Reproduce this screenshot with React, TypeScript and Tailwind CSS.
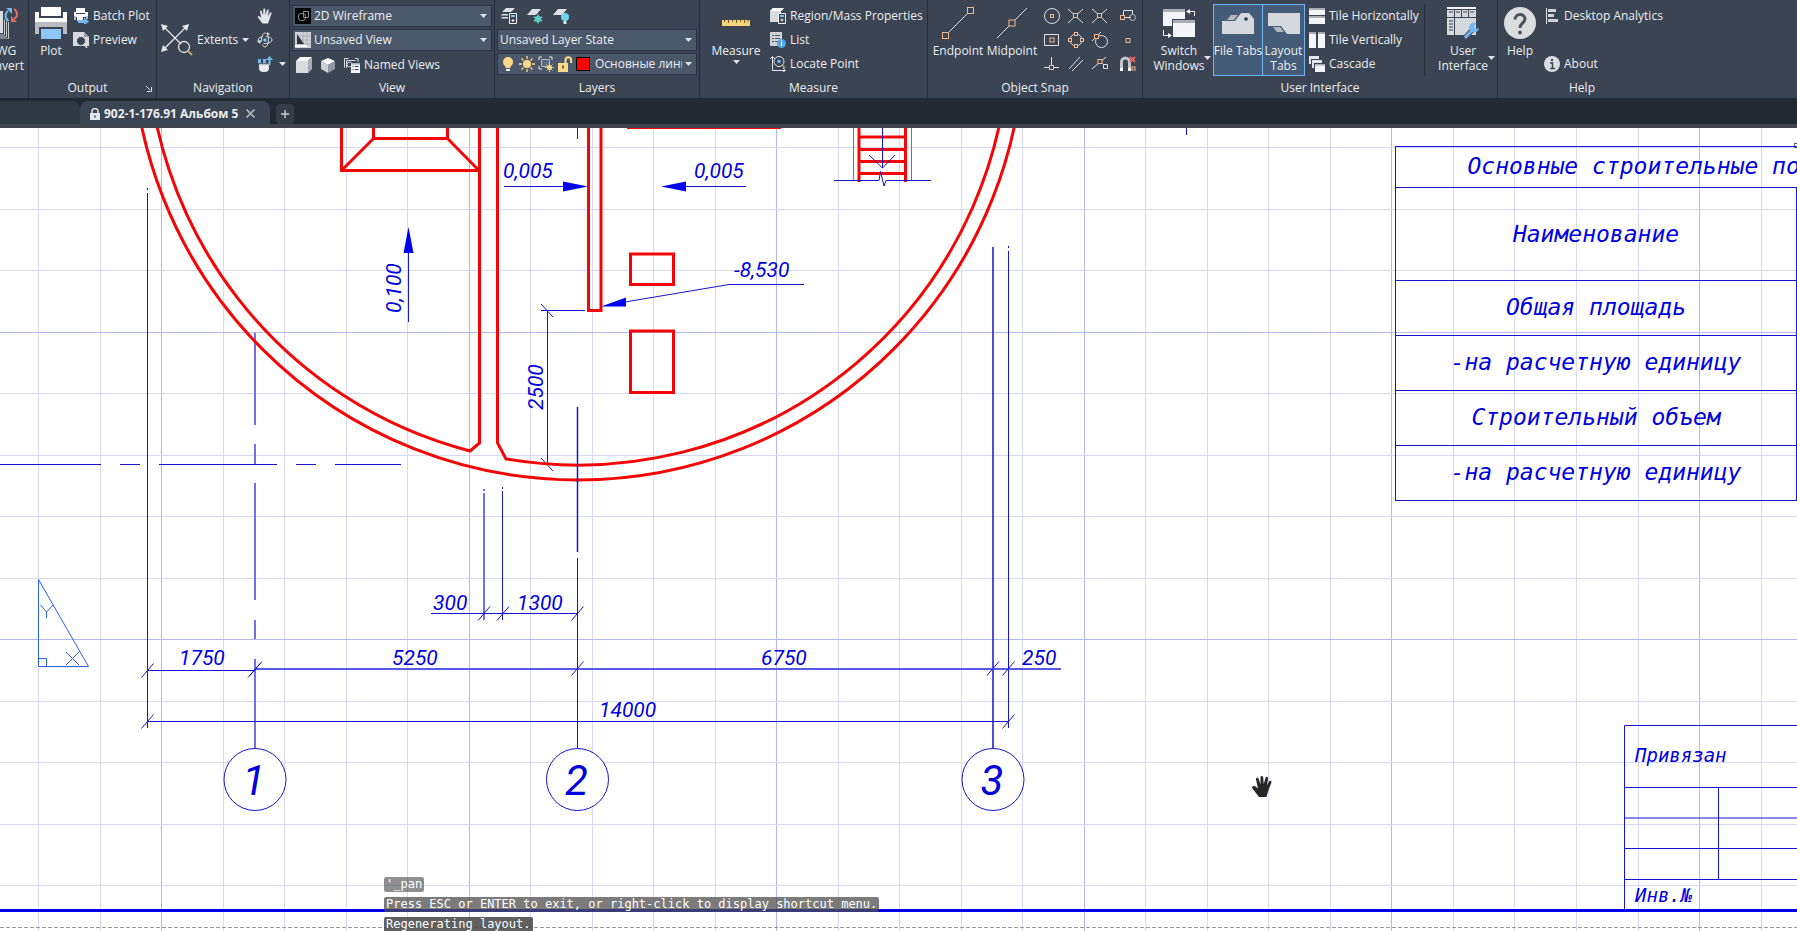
import type { ReactNode } from 'react';
import clsx from 'clsx';

const INK = '#1414d2';
const PEN = '#0000e0';
const WALL = '#f40606';

/* ---------- small icons ---------- */

function Svg({ size = 16, children, className }: { size?: number; children: ReactNode; className?: string }) {
  return (
    <svg width={size} height={size} viewBox={`0 0 ${size} ${size}`} fill="none" className={clsx('shrink-0', className)} aria-hidden="true">
      {children}
    </svg>
  );
}

function Caret({ className }: { className?: string }) {
  return (
    <svg width="7" height="4" viewBox="0 0 7 4" className={clsx('shrink-0', className)} aria-hidden="true">
      <path d="M0 0h7L3.500 4z" fill="#dde1e7" />
    </svg>
  );
}

const ConvertIcon = () => (
  <Svg size={32}>
    <path d="M0 4h17v22H0z" fill="#d9dbde" />
    <path d="M18.500 8v20H2M20.500 11v19H2M22.500 14v18H2" stroke="#c3c6cb" />
    <path d="M17 0h15v15H21l-4-4z" fill="#3b4453" />
    <path d="M22.500 14a6 6 0 0 1-.5-10" stroke="#6fb9f0" strokeWidth="2" />
    <path d="M20 1h6v6z" fill="#6fb9f0" />
    <path d="M28 2a6 6 0 0 1 .5 10" stroke="#ee6a64" strokeWidth="2" />
    <path d="M31 15h-6V9z" fill="#ee6a64" />
  </Svg>
);

const PlotIcon = () => (
  <Svg size={32}>
    <path d="M6 0h20v9H6z" fill="#fff" />
    <path d="M0 5h4v6h24V5h4v15H0z" fill="#fff" />
    <path d="M0 15h32v12h-4v-7H4v7H0z" fill="#b9bbbe" />
    <path d="M6 22h20v10H6z" fill="#8cc8f8" />
    <path d="M6 20h20v2H6z" fill="#3b4453" />
  </Svg>
);

const BatchPlotIcon = () => (
  <Svg>
    <path d="M3 0h9v4H3zM1 4h14v5H1z" fill="#fff" />
    <path d="M1 8h2v4H1zM13 8h2v3h-2z" fill="#b9bbbe" />
    <path d="M3 5h9v1H3z" fill="#3b4453" />
    <path d="M4 9h6v4H4z" fill="#fff" />
    <path d="M5 12h6V9.500l5 4-5 4V15H5z" fill="#6fb9f0" />
  </Svg>
);

const PreviewIcon = () => (
  <Svg>
    <path d="M0 0h11l5 5v9H0z" fill="#d9dbde" />
    <path d="M11 0l5 5h-5z" fill="#9aa0aa" />
    <circle cx="8" cy="9" r="4.500" fill="#3b4453" stroke="#d9dbde" />
    <path d="M11 12l3 4" stroke="#d9dbde" strokeWidth="1.500" />
  </Svg>
);

const ExtentsIcon = () => (
  <Svg size={32}>
    <path d="M3 3l17 17M2 26L26 2" stroke="#e3e5e9" strokeWidth="1.300" />
    <path d="M0 0l7 2-5 5zM28 0l-2 7-5-5zM0 28l2-7 5 5z" fill="#e3e5e9" />
    <circle cx="23" cy="23" r="5.500" stroke="#e3e5e9" strokeWidth="1.300" />
    <path d="M27 27l4 4" stroke="#c9a76a" strokeWidth="2" />
  </Svg>
);

const PanIcon = () => (
  <Svg>
    <path
      d="M5.500 15.500L1 9.500c-.8-1 .6-2 1.500-1.200L4.300 10 3 3.500c-.2-1.300 1.500-1.500 1.800-.3L6.200 7.500 6.300 1.500c0-1.400 1.900-1.400 2 0l.3 5.800 1.300-5c.3-1.200 2-.8 1.800.4l-.7 5.600 1.900-3.600c.6-1 2-.4 1.600.8L12.300 12l-1.300 3.500z"
      fill="#e3e5e9"
    />
  </Svg>
);

const OrbitIcon = () => (
  <Svg>
    <ellipse cx="8" cy="8" rx="7" ry="3.500" stroke="#d9dbde" strokeDasharray="10 3" />
    <ellipse cx="8" cy="8" rx="3.500" ry="7" stroke="#d9dbde" strokeDasharray="12 3" />
    <circle cx="8" cy="8" r="1.800" fill="#7ec3f5" />
    <path d="M10 0l3 2-3 2zM0 9l3 3 1-4z" fill="#d9dbde" />
  </Svg>
);

const WheelIcon = () => (
  <Svg>
    <path d="M2 8h10v4a4 4 0 0 1-4 4H6a4 4 0 0 1-4-4z" fill="#e9eaec" />
    <path d="M1 3h3v4H1zM6 3h3v4H6z" fill="#6fb9f0" />
    <path d="M2 8h10" stroke="#8b919b" />
    <path d="M11.500 9V4H9l3.500-4L16 4h-2.500v5z" fill="#6fb9f0" />
  </Svg>
);

const WireframeIcon = () => (
  <Svg>
    <path d="M0 0h16v16H0z" fill="#050505" />
    <circle cx="7" cy="9" r="3.800" stroke="#8d8d8d" />
    <path d="M8.500 3.500h5v6h-5z" stroke="#8d8d8d" />
  </Svg>
);

const UnsavedViewIcon = () => (
  <Svg>
    <path d="M0 0h16v16H0z" fill="#cfd1d4" />
    <path d="M8 0v14M12 0v14M2 4h14M2 8h14M2 12h14" stroke="#aeb2b8" />
    <path d="M2 2v10h7z" fill="#2b3340" />
    <path d="M0 14h12" stroke="#fff" strokeWidth="2" />
  </Svg>
);

const TopCubeIcon = () => (
  <Svg>
    <path d="M0 4h12v12H0z" fill="#d9dbde" />
    <path d="M0 4l4-4h12l-4 4z" fill="#fff" />
    <path d="M12 4l4-4v12l-4 4z" fill="#a9adb4" />
  </Svg>
);

const IsoCubeIcon = () => (
  <Svg>
    <path d="M8 1l7 3-7 4-7-4z" fill="#fff" />
    <path d="M1 4l7 4v8l-7-4z" fill="#cfd1d4" />
    <path d="M15 4L8 8v8l7-4z" fill="#9298a2" />
  </Svg>
);

const NamedViewsIcon = () => (
  <Svg>
    <path d="M.5 10.500V1.500h4M11 1.500h3V5M2.500 11V3.500h9" stroke="#d9dbde" />
    <circle cx="5.500" cy="7.500" r="2.500" stroke="#d9dbde" />
    <path d="M7 6h9v10H7z" fill="#f2f3f4" />
    <path d="M8.500 9.500h1M11 9.500h3.500M8.500 12.500h1M11 12.500h3.500" stroke="#3b4453" />
    <path d="M7 6h9v1.500H7z" fill="#a9adb4" />
  </Svg>
);

const LayerStateIcon = () => (
  <Svg>
    <path d="M5 0h9l-4 4H1zM1 6h6v1.500H0zM1 9h6v1.500H0z" fill="#dfe1e4" />
    <path d="M8.500 5.500h7v10h-7z" fill="#3b4453" stroke="#f2f3f4" />
    <path d="M10 7h4v2h-4z" fill="#7ec3f5" />
    <path d="M12 11v3M10.500 12.500h3" stroke="#f2f3f4" />
  </Svg>
);

const LayerFreezeIcon = () => (
  <Svg>
    <path d="M5 1h9L9 7H0z" fill="#dfe1e4" />
    <circle cx="11" cy="11" r="5" fill="#3b4453" />
    <path d="M11 6.500v9M7 9l8 4M15 9l-8 4" stroke="#62d6cf" strokeWidth="1.500" />
    <circle cx="11" cy="11" r="2.800" stroke="#62d6cf" />
  </Svg>
);

const LayerOffIcon = () => (
  <Svg>
    <path d="M5 1h9L9 7H0z" fill="#dfe1e4" />
    <circle cx="12" cy="9" r="4" fill="#6fd3f0" />
    <path d="M10.500 13h3v3h-3z" fill="#dfe1e4" />
  </Svg>
);

const BulbIcon = () => (
  <Svg>
    <circle cx="8" cy="6" r="5" fill="#ffd98a" />
    <path d="M5.500 9h5v3h-5z" fill="#ffd98a" />
    <path d="M6 13h4v2H6z" fill="#f2f3f4" />
  </Svg>
);

const SunIcon = () => (
  <Svg>
    <circle cx="8" cy="8" r="4" fill="#ffd98a" />
    <path d="M8 0v3M8 13v3M0 8h3M13 8h3M2.500 2.500l2 2M11.500 11.500l2 2M2.500 13.500l2-2M11.500 4.500l2-2" stroke="#ffd98a" strokeWidth="1.300" />
  </Svg>
);

const ViewportSunIcon = () => (
  <Svg>
    <path d="M1 4V1h3M11 1h3v3M1 10v3h3" stroke="#e3e5e9" />
    <path d="M3.500 3.500h8v7h-8z" stroke="#aeb6c2" fill="#5d6b7d" />
    <circle cx="11.500" cy="11.500" r="2.500" fill="#ffd98a" />
    <path d="M11.500 7v1.500M11.500 14.500V16M7 11.500h1.500M14.500 11.500H16M8.500 8.500l1 1M14.500 14.500l-1-1M8.500 14.500l1-1M14.500 8.500l-1 1" stroke="#ffd98a" />
  </Svg>
);

const UnlockIcon = () => (
  <Svg>
    <path d="M1 7h10v9H1z" fill="#ffd98a" />
    <path d="M8.500 7V4a2.800 2.800 0 0 1 5.600 0v3" stroke="#ffd98a" strokeWidth="2" />
    <path d="M6 9.500v3" stroke="#3b4453" strokeWidth="1.500" />
  </Svg>
);

const RulerIcon = () => (
  <Svg size={32}>
    <path d="M2 13h28v6H2z" fill="#fbd27c" />
    <path d="M4.500 13v2M8.500 13v3M12.500 13v2M16.500 13v3M20.500 13v2M24.500 13v3M28 13v2" stroke="#7a5a20" />
  </Svg>
);

const RegionIcon = () => (
  <Svg>
    <path d="M0 3l3-3h11l-3 3v11H0z" fill="#d9dbde" />
    <path d="M0 3l3-3h11l-3 3z" fill="#fff" />
    <path d="M8.500 5.500h7v10h-7z" fill="#3b4453" stroke="#f2f3f4" />
    <path d="M10 7h4v2h-4z" fill="#7ec3f5" />
    <path d="M12 10.500v3M10.500 12h3" stroke="#f2f3f4" />
  </Svg>
);

const ListIcon = () => (
  <Svg>
    <path d="M0 0h12v14H0z" fill="#cfd1d4" />
    <path d="M2 3.500h2M5 3.500h5M2 6.500h2M5 6.500h5M2 9.500h2M5 9.500h3" stroke="#4d5766" />
    <circle cx="11.500" cy="11.500" r="4.500" fill="#4ea3e6" />
    <path d="M11.500 10.500v3.500M11.500 8.500v1" stroke="#fff" strokeWidth="1.300" />
  </Svg>
);

const LocateIcon = () => (
  <Svg>
    <path d="M2.500 1v13.500H15M0 3l2.500-2.500L5 3M13 12l2.500 2.500L13 16" stroke="#e3e5e9" />
    <circle cx="9" cy="5.500" r="5" stroke="#e3e5e9" />
    <circle cx="9" cy="5.500" r="1.800" fill="#6fb9f0" />
    <path d="M12 9l3 3" stroke="#c9a76a" strokeWidth="1.500" />
  </Svg>
);

const Node = ({ x, y, s = 4 }: { x: number; y: number; s?: number }) => (
  <rect x={x - s / 2} y={y - s / 2} width={s} height={s} fill="#3b4453" stroke="#f3b98c" />
);

const EndpointIcon = () => (
  <Svg size={32}>
    <path d="M4 28L28 4" stroke="#dfe1e4" />
    <Node x={3.5} y={28.5} s={6} />
    <Node x={28.5} y={3.5} s={6} />
  </Svg>
);

const MidpointIcon = () => (
  <Svg size={32}>
    <path d="M1 31L31 1" stroke="#dfe1e4" />
    <Node x={16} y={16} s={6} />
  </Svg>
);

const SNAPS: { name: string; art: ReactNode }[] = [
  { name: 'Center', art: <><circle cx="8" cy="8" r="7.500" stroke="#dfe1e4" /><Node x={8} y={8} s={3} /></> },
  { name: 'Intersection', art: <><path d="M0 1l15 14M15 1L0 15" stroke="#dfe1e4" /><Node x={7.5} y={7.5} /></> },
  { name: 'Apparent Intersection', art: <><path d="M0 1l6 5M9 9l6 6M15 1L0 15" stroke="#dfe1e4" /><Node x={7.5} y={7.5} /></> },
  { name: 'Insertion', art: <><path d="M3.500 9V2.500h9V6M5 9.500h6" stroke="#dfe1e4" /><circle cx="12.500" cy="9.500" r="3" stroke="#b9bdc4" /><Node x={2.5} y={9.5} /></> },
  { name: 'Geometric Center', art: <><path d="M.5 2.500h14v11H.5z" stroke="#dfe1e4" /><Node x={8} y={8} /></> },
  { name: 'Quadrant', art: <><circle cx="8" cy="8" r="6" stroke="#dfe1e4" /><Node x={8} y={2} s={3} /><Node x={8} y={14} s={3} /><Node x={2} y={8} s={3} /><Node x={14} y={8} s={3} /></> },
  { name: 'Tangent', art: <><circle cx="9.500" cy="9.500" r="6" stroke="#dfe1e4" /><path d="M0 9L9 0" stroke="#dfe1e4" /><Node x={4.5} y={4.5} /></> },
  { name: 'Node', art: <Node x={8} y={8.5} /> },
  { name: 'Perpendicular', art: <><path d="M0 11.500h15M7.500 1v10" stroke="#dfe1e4" /><Node x={7.5} y={11.5} /></> },
  { name: 'Parallel', art: <path d="M1 13L12 1M4 15L15 4" stroke="#dfe1e4" /> },
  { name: 'Nearest', art: <><path d="M0 13L14 1M8 5l6 6" stroke="#dfe1e4" /><Node x={8} y={5.5} /><path d="M11.500 8.500h4v4h-4z" fill="#3b4453" stroke="#dfe1e4" /></> },
  { name: 'None', art: <><path d="M1.500 12V6a4 4 0 0 1 8 0v6" stroke="#c3c6cb" strokeWidth="3" /><path d="M0 12h3v3H0zM8 12h3v3H8z" fill="#fff" /><path d="M10 1l5 5M15 1l-5 5" stroke="#f0605a" strokeWidth="2" /><Node x={13.5} y={12.5} s={3} /></> },
];

const SwitchWindowsIcon = () => (
  <Svg size={32}>
    <path d="M0 2h22v17H0z" fill="#f4f5f6" />
    <path d="M0 2h22v3H0z" fill="#a9adb4" />
    <path d="M9 12h23v19H9z" fill="#3b4453" />
    <path d="M10 13h22v17H10z" fill="#f4f5f6" />
    <path d="M10 13h22v3H10z" fill="#a9adb4" />
    <path d="M31.500 9V4.500H25M.5 23v5.500H6" stroke="#f4f5f6" />
    <path d="M23 4.500L27 2v5zM9 28.500L5 26v5z" fill="#f4f5f6" />
  </Svg>
);

const FileTabsIcon = () => (
  <Svg size={32}>
    <path d="M0 14h13l6-8h8l5 6v15H0z" fill="#d5d8dc" />
    <path d="M5 13l4-5h7l-4 5z" fill="#b4b8be" />
    <circle cx="24" cy="12" r="1.800" fill="#2b3340" />
  </Svg>
);

const LayoutTabsIcon = () => (
  <Svg size={32}>
    <path d="M0 6h32v21H19l-6-8H0z" fill="#d5d8dc" />
    <path d="M5 20h7l4 5H9z" fill="#b4b8be" />
  </Svg>
);

const TileHIcon = () => (
  <Svg>
    <path d="M0 1h16v6H0zM0 9h16v7H0z" fill="#f4f5f6" />
    <path d="M0 0h16v2H0zM0 8h16v2H0z" fill="#a9adb4" />
  </Svg>
);

const TileVIcon = () => (
  <Svg>
    <path d="M0 0h7v16H0zM9 0h7v16H9z" fill="#f4f5f6" />
    <path d="M0 0h7v2H0zM9 0h7v2H9z" fill="#a9adb4" />
  </Svg>
);

const CascadeIcon = () => (
  <Svg>
    <path d="M0 0h10v3H2v5H0z" fill="#e3e5e9" />
    <path d="M3 4h10v3H5v5H3z" fill="#e3e5e9" />
    <path d="M6 8h10v8H6z" fill="#f4f5f6" />
    <path d="M6 8h10v1.500H6z" fill="#a9adb4" />
  </Svg>
);

const UserInterfaceIcon = () => (
  <Svg size={32}>
    <path d="M0 0h29v2H0z" fill="#f2f3f4" />
    <path d="M0 3h29v7H0zM0 11h7v17H0zM8 11h21v17H8z" fill="#d5d8dc" />
    <path d="M2 5h4M9 5h4M16 5h4M23 5h4M7.500 3v7M14.500 3v7M21.500 3v7M2 14h4M2 17h4M2 20h4M2 23h4" stroke="#3b4453" />
    <path d="M18 31l8-9" stroke="#3b4453" strokeWidth="5" />
    <path d="M18 31l8-9" stroke="#6fb9f0" strokeWidth="3" />
    <path d="M29 16a5 5 0 1 0 3 5l-3 1-2-2z" fill="#6fb9f0" />
  </Svg>
);

const HelpIcon = () => (
  <Svg size={32}>
    <circle cx="16" cy="16" r="16" fill="#dcdddf" />
    <path d="M11 12.500c0-6.500 10-6.500 10-.5 0 4-5 4-5 9" stroke="#4d535c" strokeWidth="3" />
    <circle cx="16" cy="25.500" r="2" fill="#4d535c" />
  </Svg>
);

const AnalyticsIcon = () => (
  <Svg>
    <path d="M2.500 0v16" stroke="#dfe1e4" />
    <path d="M4 1h8v3H4zM4 6h6v3H4zM4 11h10v3H4z" fill="#cfd1d4" />
  </Svg>
);

const AboutIcon = () => (
  <Svg>
    <circle cx="8" cy="8" r="8" fill="#dcdddf" />
    <path d="M6 7h2.500v5M6 12.500h5" stroke="#3b4453" strokeWidth="1.500" />
    <circle cx="8" cy="4" r="1.200" fill="#3b4453" />
  </Svg>
);

/* ---------- ribbon building blocks ---------- */

function Panel({ title, className, children, launcher }: { title: string; className: string; children: ReactNode; launcher?: boolean }) {
  return (
    <section aria-label={title || 'Convert'} className={clsx('flex shrink-0 flex-col overflow-hidden border-r border-[#252d39]', className)}>
      <div className="flex h-[76px] pt-1">{children}</div>
      <div className={clsx('relative text-center leading-6', launcher && 'pr-2.5')}>
        {title}
        {launcher && (
          <svg width="6" height="6" viewBox="0 0 6 6" className="absolute right-1 top-2.5" aria-hidden="true">
            <path d="M0 0l4 4M5.500 1v4.500H1" stroke="#dde1e7" fill="none" />
          </svg>
        )}
      </div>
    </section>
  );
}

function BigButton({ icon, lines, caret, active, className }: { icon: ReactNode; lines: string[]; caret?: boolean; active?: boolean; className: string }) {
  return (
    <button
      type="button"
      aria-pressed={active}
      className={clsx('relative flex h-[72px] shrink-0 flex-col items-center', className, active ? 'border border-[#6fb7ee] bg-[#445c78] pt-0.5' : 'pt-[3px]')}
    >
      {icon}
      <span className="mt-1 leading-[15px] whitespace-nowrap">
        {lines.map((line) => (
          <span key={line} className="block">{line}</span>
        ))}
      </span>
      {caret && <Caret className={clsx('absolute', lines.length > 1 ? '-right-1 top-[52px]' : 'top-14')} />}
    </button>
  );
}

function SmallButton({ icon, label }: { icon: ReactNode; label: string }) {
  return (
    <button type="button" className="flex h-6 items-center gap-1 whitespace-nowrap">
      {icon}
      {label}
    </button>
  );
}

function IconButton({ label, children, className }: { label: string; children: ReactNode; className?: string }) {
  return (
    <button type="button" aria-label={label} className={clsx('flex h-6 items-center', className)}>
      {children}
    </button>
  );
}

function Combo({ label, value, icons }: { label: string; value: string; icons?: ReactNode }) {
  return (
    <div className="mb-0.5 flex h-[22px] items-center gap-[3px] border border-[#2a3341] bg-[#4b586a] pr-1 pl-0.5">
      {icons}
      <select aria-label={label} className="h-5 min-w-0 flex-1 appearance-none overflow-hidden bg-transparent outline-none">
        <option>{value}</option>
      </select>
      <Caret className="pointer-events-none" />
    </div>
  );
}

function Ribbon() {
  return (
    <div className="flex h-[98px] shrink-0 overflow-hidden bg-[#3b4453]">
      <Panel title="" className="w-[29px]">
        <BigButton icon={<ConvertIcon />} lines={['DWG', 'Convert']} className="-ml-[22px] w-12" />
      </Panel>

      <Panel title="Output" launcher className="w-32">
        <BigButton icon={<PlotIcon />} lines={['Plot']} className="ml-1 w-9" />
        <div className="ml-1">
          <SmallButton icon={<BatchPlotIcon />} label="Batch Plot" />
          <SmallButton icon={<PreviewIcon />} label="Preview" />
        </div>
      </Panel>

      <Panel title="Navigation" className="w-[133px]">
        <button type="button" className="ml-1 flex h-[72px] items-center gap-1">
          <ExtentsIcon />
          Extents
          <Caret />
        </button>
        <div className="ml-2">
          <IconButton label="Pan"><PanIcon /></IconButton>
          <IconButton label="Orbit"><OrbitIcon /></IconButton>
          <IconButton label="SteeringWheels">
            <WheelIcon />
            <Caret className="ml-1.5" />
          </IconButton>
        </div>
      </Panel>

      <Panel title="View" className="w-[205px]">
        <div className="mt-px w-full px-0.5">
          <Combo label="Visual style" value="2D Wireframe" icons={<WireframeIcon />} />
          <Combo label="View" value="Unsaved View" icons={<UnsavedViewIcon />} />
          <div className="flex gap-2 pl-1">
            <IconButton label="Top"><TopCubeIcon /></IconButton>
            <IconButton label="Isometric"><IsoCubeIcon /></IconButton>
            <SmallButton icon={<NamedViewsIcon />} label="Named Views" />
          </div>
        </div>
      </Panel>

      <Panel title="Layers" className="w-[205px]">
        <div className="w-full px-0.5">
          <div className="mb-px flex gap-2.5 pl-1">
            <IconButton label="Layer properties"><LayerStateIcon /></IconButton>
            <IconButton label="Freeze layer"><LayerFreezeIcon /></IconButton>
            <IconButton label="Layer off"><LayerOffIcon /></IconButton>
          </div>
          <Combo label="Layer state" value="Unsaved Layer State" />
          <Combo
            label="Layer"
            value="Основные линии"
            icons={
              <>
                <BulbIcon />
                <SunIcon />
                <ViewportSunIcon />
                <UnlockIcon />
                <span className="mr-0.5 size-3.5 shrink-0 border border-black bg-[#ff0000]" />
              </>
            }
          />
        </div>
      </Panel>

      <Panel title="Measure" className="w-[228px]">
        <BigButton icon={<RulerIcon />} lines={['Measure']} caret className="ml-2 w-14" />
        <div className="ml-1.5">
          <SmallButton icon={<RegionIcon />} label="Region/Mass Properties" />
          <SmallButton icon={<ListIcon />} label="List" />
          <SmallButton icon={<LocateIcon />} label="Locate Point" />
        </div>
      </Panel>

      <Panel title="Object Snap" className="w-[215px]">
        <BigButton icon={<EndpointIcon />} lines={['Endpoint']} className="ml-1 w-[52px]" />
        <BigButton icon={<MidpointIcon />} lines={['Midpoint']} className="w-14" />
        <div className="ml-1 grid h-[72px] grid-cols-[repeat(4,16px)] gap-x-2">
          {SNAPS.map((snap) => (
            <IconButton key={snap.name} label={snap.name} className="[&:nth-child(4n)]:ml-1">
              <Svg>{snap.art}</Svg>
            </IconButton>
          ))}
        </div>
      </Panel>

      <Panel title="User Interface" className="w-[355px]">
        <BigButton icon={<SwitchWindowsIcon />} lines={['Switch', 'Windows']} caret className="ml-2 w-14" />
        <BigButton icon={<FileTabsIcon />} lines={['File Tabs']} active className="ml-1.5 w-[50px]" />
        <BigButton icon={<LayoutTabsIcon />} lines={['Layout', 'Tabs']} active className="-ml-px w-[43px]" />
        <div className="ml-1">
          <SmallButton icon={<TileHIcon />} label="Tile Horizontally" />
          <SmallButton icon={<TileVIcon />} label="Tile Vertically" />
          <SmallButton icon={<CascadeIcon />} label="Cascade" />
        </div>
        <div className="ml-auto flex border-l border-[#252d39] pr-1.5 pl-2.5">
          <BigButton icon={<UserInterfaceIcon />} lines={['User', 'Interface']} caret className="w-14" />
        </div>
      </Panel>

      <Panel title="Help" className="w-[168px] border-r-0">
        <BigButton icon={<HelpIcon />} lines={['Help']} className="ml-1 w-9" />
        <div className="ml-1.5">
          <SmallButton icon={<AnalyticsIcon />} label="Desktop Analytics" />
          <div className="h-6" />
          <SmallButton icon={<AboutIcon />} label="About" />
        </div>
      </Panel>
    </div>
  );
}

function FileTabBar() {
  return (
    <nav aria-label="Open drawings" className="flex h-[30px] shrink-0 items-end border-b-4 border-[#40454d] bg-[#222933]">
      <div className="h-[23px] w-20 rounded-tr-lg bg-[#303843]" />
      <div className="flex h-[23px] w-[190px] items-center gap-1 rounded-t-lg bg-[#3b4453] pt-0.5 pl-2.5">
        <svg width="10" height="12" viewBox="0 0 10 12" aria-hidden="true">
          <path d="M0 5h10v7H0z" fill="#e3e5e9" />
          <path d="M2 6V3.500a3 3 0 0 1 6 0V6" stroke="#e3e5e9" strokeWidth="1.500" fill="none" />
          <path d="M5 7.500v2" stroke="#3b4453" strokeWidth="1.500" />
        </svg>
        <a href="#drawing" className="font-bold whitespace-nowrap">902-1-176.91 Альбом 5</a>
        <button type="button" aria-label="Close drawing" className="ml-1">
          <svg width="9" height="9" viewBox="0 0 9 9" aria-hidden="true">
            <path d="M.5.500l8 8M8.500.500l-8 8" stroke="#a9adb4" strokeWidth="1.800" />
          </svg>
        </button>
      </div>
      <button type="button" aria-label="New drawing" className="ml-1.5 flex h-5 w-[18px] items-center justify-center rounded bg-[#343c48]">
        <svg width="8" height="8" viewBox="0 0 8 8" aria-hidden="true">
          <path d="M4 0v8M0 4h8" stroke="#c3c6cb" strokeWidth="1.500" />
        </svg>
      </button>
    </nav>
  );
}

/* ---------- drawing sheet ---------- */

const PITCH = 61.52;

function Grid() {
  const cols = Array.from({ length: 60 }, (_, i) => i);
  const rows = Array.from({ length: 30 }, (_, i) => i);
  return (
    <g>
      {cols.map((i) => (
        <rect key={i} x={Math.round(38 + i * PITCH)} y="0" width="1" height="100%" fill={i % 5 === 2 ? '#b3b9ee' : '#d6d8f4'} />
      ))}
      {rows.map((i) => (
        <rect key={i} x="0" y={Math.round(19 + i * PITCH)} width="100%" height="1" fill={i % 5 === 3 ? '#b3b9ee' : '#d6d8f4'} />
      ))}
    </g>
  );
}

// slash marks at the ends of dimension lines
const TICKS: [number, number][] = [
  [484, 613.5], [503, 613.5], [577.5, 613.5],
  [147.5, 670.5], [254, 670.5], [256, 668.5], [577.5, 668.5], [993, 668.5], [1008.5, 668.5],
  [147.5, 721.5], [1008.5, 721.5],
];

const LABELS: { text: string; x: number; y: number; turn?: boolean }[] = [
  { text: '0,005', x: 503, y: 178 },
  { text: '0,005', x: 694, y: 178 },
  { text: '-8,530', x: 734, y: 277 },
  { text: '0,100', x: 401, y: 313, turn: true },
  { text: '2500', x: 543, y: 410, turn: true },
  { text: '300', x: 433, y: 610 },
  { text: '1300', x: 517, y: 610 },
  { text: '1750', x: 179, y: 665 },
  { text: '5250', x: 392, y: 665 },
  { text: '6750', x: 761, y: 665 },
  { text: '250', x: 1022, y: 665 },
  { text: '14000', x: 599, y: 717 },
];

const AXES = [
  { name: '1', x: 255 },
  { name: '2', x: 577.5 },
  { name: '3', x: 993 },
];

function Sheet() {
  return (
    <svg className="absolute inset-0 h-full w-full" role="img" aria-label="Floor plan">
      <Grid />
      {/* the model origin sits above the visible sheet */}
      <g transform="translate(0 -128)" fill="none">
        <g stroke={INK}>
          <path d="M147.500 193V728M147.500 188v2" />
          <path d="M255 333V425M255 444V464M255 483V600M255 620V639M255 659V749" stroke="#7070ec" strokeWidth="2" />
          <path d="M577.500 128V139M577.500 558V749" />
          <path d="M993 247V749" strokeWidth="1.500" />
          <path d="M1008.500 251V728M1008.500 246v2M1186.500 128V135" />
          <path d="M0 464.500H101M120 464.500H140M159 464.500H277M296 464.500H316M335 464.500H401" />
          <path d="M484 493V620M484 489v2" stroke="#7070ec" strokeWidth="2" />
          <path d="M502.500 491V620M502.500 487v2" />
          <path d="M431 613.500H577" />
          <path d="M147 670.500H255M147 721.500H1009" />
          <path d="M255 669H1061" stroke="#5a5ae6" strokeWidth="2" />
          <path d="M547.500 310V465M541 310.500H585" />
          {TICKS.map(([x, y]) => (
            <path key={`${x}-${y}`} d={`M${x - 6} ${y + 7}L${x + 6} ${y - 7}`} />
          ))}
          <path d="M541 304L553 317M541 458L553 471" />
          {AXES.map((axis) => (
            <circle key={axis.name} cx={axis.x} cy="779.500" r="31" fill="#fff" />
          ))}
        </g>

        {/* walls */}
        <g stroke={WALL} strokeWidth="3">
          <circle cx="578" cy="34" r="446" />
          <path d="M147 34A431 431 0 0 0 470 451L479.500 443V100" />
          <path d="M1009 34A431 431 0 0 1 506 459L497.500 443V100" />
          <path d="M341.500 100V170.500H479M373.500 100V138.500H447.500V100M341.500 170.500L373.500 138.500M479 170.500L447.500 138.500" />
          <path d="M588.500 100V310.500H601V100" />
          <path d="M630.500 254H673.500V284.500H630.500ZM630.500 331H673.500V392.500H630.500Z" />
          <path d="M627 127.500H781" />
          <path d="M859 100V182M905.500 100V182M859 137H905M859 149.500H905M859 161.500H905M859 173.500H905" />
        </g>
        <path d="M853.500 128V180M911.500 128V180" stroke="#3f9a4d" />
        <path d="M577.500 407V552" stroke={INK} strokeWidth="1.500" />

        {/* slope arrows, leader and stair break */}
        <g stroke={INK}>
          <path d="M882.500 128V168M869 155L882.500 168L895 155M834 180.500H879L880.500 171.500L884 186L886 180.500H931" />
          <path d="M504 186.500H565M746 186.500H684M408.500 322V252M804 284.500H729L625 302" />
        </g>
        <path d="M588 186.500l-25-5v10zM661 186.500l25-5v10zM408.500 227l-5 26h10zM601 306.500l25-9v9z" fill="#0000f5" />

        {/* title block */}
        <g stroke={INK}>
          <path d="M1797 725.500H1624.500V909M1624 787.500H1797M1624 818H1797M1624 848.500H1797M1624 879.500H1797M1718.500 787V880" />
        </g>
        <path d="M0 910.500H4000" stroke="#0000ee" strokeWidth="3" />
        <path d="M0 927.500H4000" stroke="#9a9a9a" strokeDasharray="4 2" />

        {/* UCS */}
        <path
          d="M38.500 579.500V666.500H88.500ZM38.500 658.500H46.500V666.500M40.500 605L46.500 612L53 605M46.500 612V618M66 652L79 665M80 651L66 665"
          stroke="#2b62e0"
        />
        <path d="M1794 143.500H1797M1794.500 143V147M1794 147.500H1797" stroke="#555" />

        <g fill={PEN} className="font-['Roboto'] text-[21px] italic">
          {LABELS.map(({ text, x, y, turn }) => (
            <text key={`${x}-${y}`} transform={`translate(${x} ${y})${turn ? ' rotate(-90)' : ''}`}>{text}</text>
          ))}
        </g>
        <g fill={PEN} className="font-['Roboto'] text-[42px] italic" textAnchor="middle">
          {AXES.map((axis) => (
            <text key={axis.name} x={axis.x - 1} y="795">{axis.name}</text>
          ))}
        </g>
        <g fill={PEN} className="font-['DejaVu_Sans_Mono'] text-[19px] italic">
          <text x="1635" y="762">Привязан</text>
          <text x="1635" y="902">Инв.№</text>
        </g>

        {/* pan cursor */}
        <path
          d="M1259 797L1252.500 788.500C1251 786.500 1253.500 785 1255.500 786.500L1258 788.500L1256 779.500C1255.700 777.500 1258 777 1258.700 779L1260.500 784.500V777.500C1260.500 775.500 1263 775.500 1263.200 777.500L1263.700 784.300L1265.500 778C1266 776 1268.300 776.700 1268 778.700L1267 785.500L1269 781.500C1270 779.800 1272 780.800 1271.300 782.700L1268 791.500L1266.500 797Z"
          fill="#262626"
        />
      </g>
    </svg>
  );
}

const SCHEDULE = ['Общая площадь', '-на расчетную единицу', 'Строительный объем', '-на расчетную единицу'];

function ScheduleTable() {
  return (
    <table className="absolute top-[18px] left-[1395px] w-[588px] table-fixed border-collapse text-center font-['DejaVu_Sans_Mono'] text-[23px] leading-8 whitespace-nowrap text-[#0000e0] italic">
      <colgroup>
        <col className="w-[401px]" />
        <col />
      </colgroup>
      <thead>
        <tr className="h-[41px]">
          <th colSpan={2} className="border border-[#1414d2] p-0 pb-0.5 font-normal">Основные строительные показатели</th>
        </tr>
        <tr className="h-[93px]">
          <th className="border border-[#1414d2] p-0 font-normal">Наименование</th>
          <th className="border border-[#1414d2] p-0" />
        </tr>
      </thead>
      <tbody>
        {SCHEDULE.map((name, i) => (
          <tr key={i} className="h-[55px]">
            <td className="border border-[#1414d2] p-0 pb-0.5">{name}</td>
            <td className="border border-[#1414d2] p-0" />
          </tr>
        ))}
      </tbody>
    </table>
  );
}

function CommandHistory() {
  return (
    <div className="absolute -bottom-px left-96 flex flex-col items-start gap-[5px] font-['DejaVu_Sans_Mono'] text-[12px] leading-[15px] whitespace-pre text-white">
      <p className="rounded-xs bg-[#5f5f5f]/70 px-0.5">{"'_pan"}</p>
      <p className="rounded-xs bg-[#4f4f4f]/75 px-0.5">Press ESC or ENTER to exit, or right-click to display shortcut menu.</p>
      <p className="rounded-xs bg-[#444444]/85 px-0.5">Regenerating layout.</p>
    </div>
  );
}

export default function App() {
  return (
    <div className="flex h-screen flex-col overflow-hidden bg-[#3b4453] font-['Open_Sans','Noto_Sans',sans-serif] text-[12px] text-[#eceef1]">
      <Ribbon />
      <FileTabBar />
      <main id="drawing" className="relative min-h-0 flex-1 overflow-hidden bg-white">
        <Sheet />
        <ScheduleTable />
        <CommandHistory />
      </main>
    </div>
  );
}
